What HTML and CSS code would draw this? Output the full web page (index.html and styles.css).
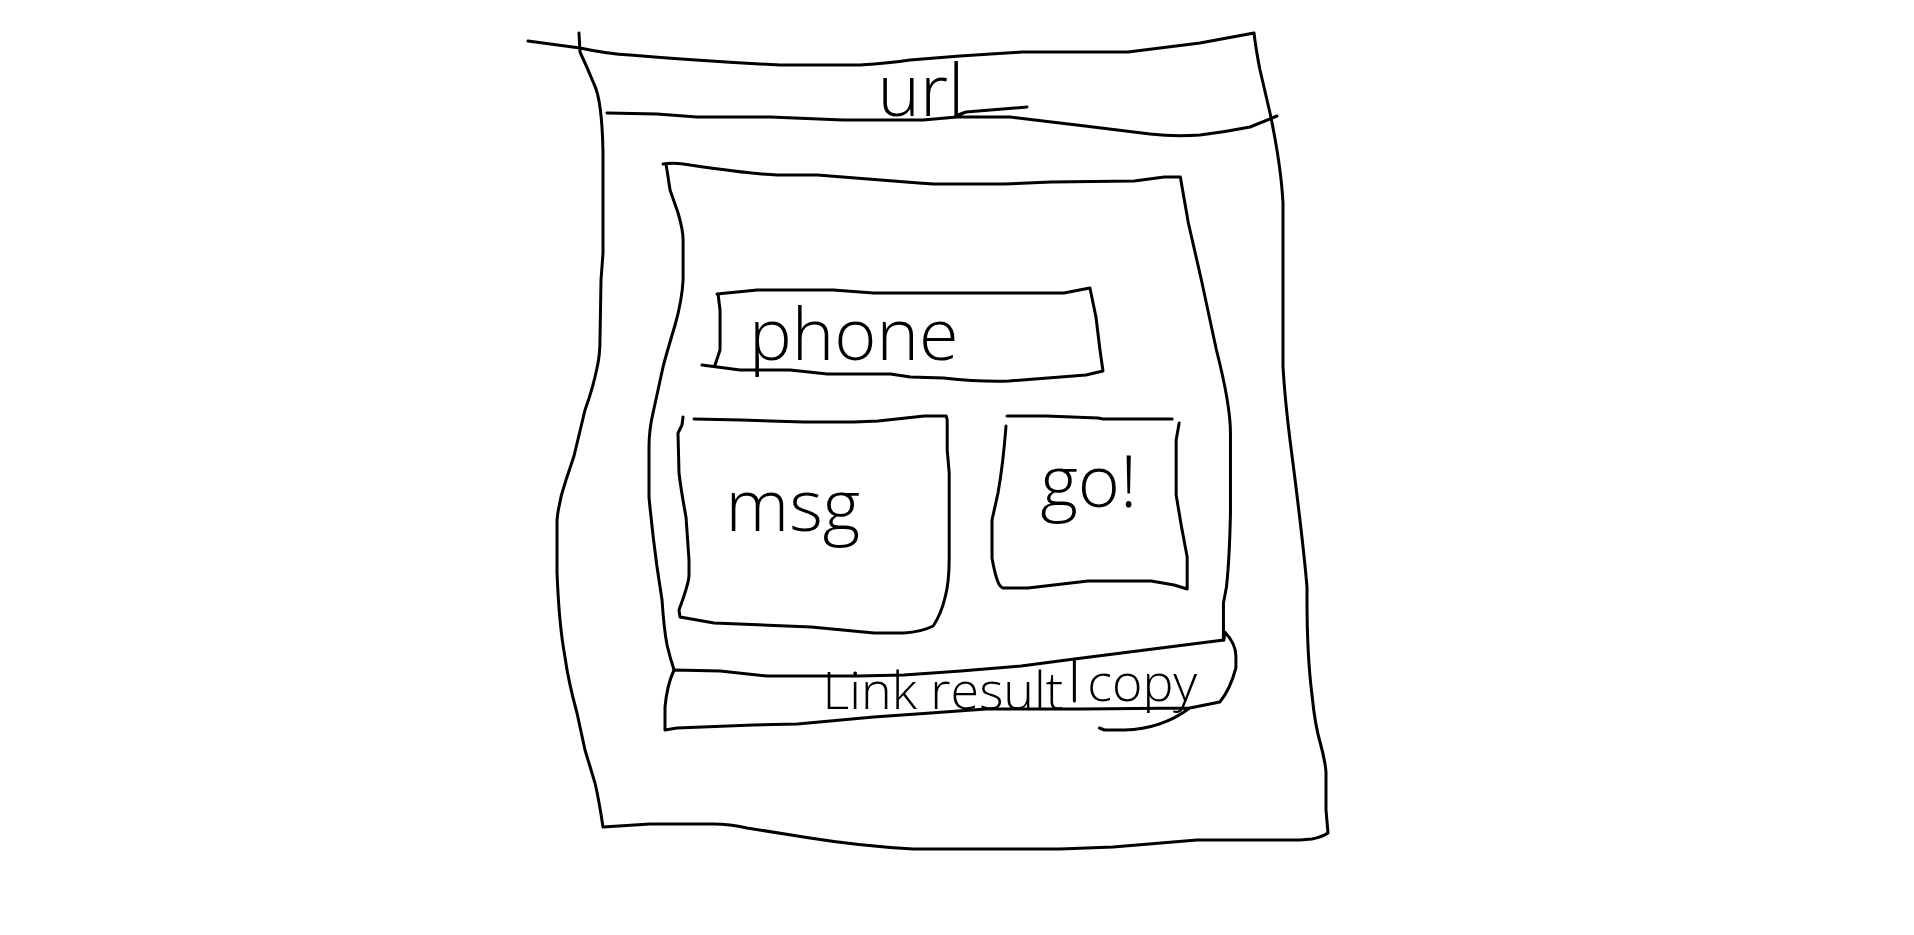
FILE: index.html
```html
<!DOCTYPE html>
<html lang="en">
<head>
<meta charset="utf-8">
<meta name="viewport" content="width=device-width, initial-scale=1">
<title>Link maker</title>
<link rel="stylesheet" href="styles.css">
</head>
<body>
<div class="page">
  <div class="window">
    <svg class="outline" viewBox="528 32 802 820" preserveAspectRatio="none" aria-hidden="true">
      <path d="M528 41L580 48Q608 54 630 55Q700 61 780 65H860Q890 63 910 60L960 56L1022 52H1128L1200 43L1254 33Q1256 50 1260 70L1270 113Q1281 165 1283 203V367Q1285 400 1290 440Q1303 540 1307 587V600Q1307 655 1312 695Q1315 725 1320 742Q1325 760 1326 772V810L1328 833Q1322 837 1312 839L1300 840H1197L1113 847L1060 849H913Q860 846 810 838L747 828Q730 824 713 824H650L603 827Q599 800 595 783L585 750L577 713Q568 680 565 657Q559 625 557 572V520Q559 500 566 480L574 456L585 410Q593 388 597 368Q600 355 600 340L601 280L603 253V152Q602 100 594 84Q587 67 580 52L579 33"/>
    </svg>
    <header class="address">
      <svg class="outline" viewBox="528 32 802 88" preserveAspectRatio="none" aria-hidden="true">
        <path d="M607 113L657 114L697 117H770L843 120H923L957 117H1010L1085 126L1150 134Q1175 137 1200 135Q1225 132 1250 127L1277 116M958 115L966 112L1027 107"/>
      </svg>
      <input class="text address-input" type="text" value="url" aria-label="Address">
    </header>
    <main class="panel">
      <svg class="outline" viewBox="648 162 584 570" preserveAspectRatio="none" aria-hidden="true">
        <path d="M663 164Q675 162 690 165Q750 174 777 175H817L918 183L933 184H1003L1050 182L1133 181L1163 177H1179L1187 223L1200 280L1215 350Q1229 405 1229 433V513Q1228 560 1225 587L1222 603V640M666 164L670 190L678 213Q683 230 683 240V280Q682 300 675 325Q666 355 663 367L653 413Q649 430 649 447V497Q652 530 657 567L662 600Q664 630 667 645Q670 658 674 670"/>
      </svg>
      <form class="form">
        <div class="field phone">
          <svg class="outline" viewBox="701 289 403 93" preserveAspectRatio="none" aria-hidden="true">
            <path d="M717 294L757 290H833L873 293H1063L1089 288L1095 317L1099 350L1102 371L1085 375L1008 381Q980 382 943 378L910 377L890 374H827L790 370H740L702 365M718 294L720 310V350L715 365"/>
          </svg>
          <input class="text phone-input" type="tel" placeholder="phone" aria-label="Phone">
        </div>
        <div class="row">
          <div class="field message">
            <svg class="outline" viewBox="677 415 272 218" preserveAspectRatio="none" aria-hidden="true">
              <path d="M693 419L740 420L803 422H853L877 421L923 416H945L946 420V450L948 473V558Q948 582 944 597Q940 614 932 626Q920 632 903 633H873L810 627L713 623L679 617L678 610Q688 583 688 575V560L685 517Q680 490 678 473L677 433L681 425L682 417"/>
            </svg>
            <textarea class="text message-input" placeholder="msg" aria-label="Message" rows="1"></textarea>
          </div>
          <button class="text go" type="button">
            <svg class="outline" viewBox="990 415 196 175" preserveAspectRatio="none" aria-hidden="true">
              <path d="M1006 416H1045L1097 418L1102 419H1171M1005 426Q1002 465 997 493L991 520V558Q994 575 997 582Q999 587 1002 588H1027L1087 581H1150L1173 585L1186 589V557L1180 525L1175 495V440L1178 423"/>
            </svg>
            go!
          </button>
        </div>
      </form>
      <div class="result">
        <svg class="outline" viewBox="666 638 566 94" preserveAspectRatio="none" aria-hidden="true">
          <path d="M674 670L720 671L767 676H857L903 675L960 671L1020 666L1073 659L1222 640L1223 632Q1234 644 1234 656V668Q1228 690 1218 702L1188 708L1080 709H985L930 713L873 717L797 724L753 725L677 728L665 730V707Q667 685 674 670ZM1073 659V701M1188 708Q1160 729 1123 730H1103L1098 728"/>
        </svg>
        <input class="text result-link" type="text" value="Link result" aria-label="Generated link" readonly>
        <button class="text copy" type="button">copy</button>
      </div>
    </main>
  </div>
</div>
</body>
</html>
```
FILE: styles.css
```css
* {
  box-sizing: border-box;
}

body {
  margin: 0;
  background: #fff;
  color: #000;
  font-family: "Open Sans", "Liberation Sans", sans-serif;
}

.page {
  display: grid;
  grid-template-columns: 528fr 802fr 584fr;
  padding: 32px 0 80px;
}

.window {
  position: relative;
  grid-column: 2;
  padding-bottom: 120px;
}

/* Hand-drawn outline stretched behind the box that owns it */
.outline {
  position: absolute;
  inset: 0;
  width: 100%;
  height: 100%;
  overflow: visible;
  pointer-events: none;
}

.outline path {
  fill: none;
  stroke: #000;
  stroke-width: 3px;
  stroke-linecap: round;
  stroke-linejoin: round;
  vector-effect: non-scaling-stroke;
}

.text {
  position: relative;
  min-width: 0;
  margin: 0;
  padding: 0;
  border: 0;
  background: none;
  color: #000;
  font-family: inherit;
  font-size: 72px;
  font-weight: 300;
  line-height: 80px;
}

.text::placeholder {
  color: #000;
  opacity: 1;
}

.address {
  position: relative;
  display: flex;
  height: 88px;
}

.address-input {
  width: 100%;
  padding: 24px 16px 0 0;
  text-align: center;
}

.panel {
  position: relative;
  margin: 42px 12% 0 15%;
  padding-top: 127px;
}

.field {
  position: relative;
  display: flex;
}

.phone {
  height: 93px;
  margin: 0 22% 0 9%;
}

.phone-input {
  width: 100%;
  padding: 0 0 8px 48px;
}

.row {
  display: grid;
  grid-template-columns: 272fr 196fr;
  gap: 41px;
  align-items: start;
  margin: 33px 8% 0 5%;
}

.message {
  height: 218px;
}

.message-input {
  width: 100%;
  padding: 48px 16px 0 48px;
  overflow: hidden;
  resize: none;
}

.go {
  height: 175px;
  padding-bottom: 48px;
}

.result {
  position: relative;
  display: grid;
  grid-template-columns: 408fr 158fr;
  align-items: center;
  height: 94px;
  margin: 5px 0 0 3%;
}

.result-link {
  width: 100%;
  padding: 8px 12px 0 0;
  font-size: 52px;
  text-align: right;
}

.copy {
  padding: 0 0 8px 12px;
  font-size: 52px;
  text-align: left;
}
```
